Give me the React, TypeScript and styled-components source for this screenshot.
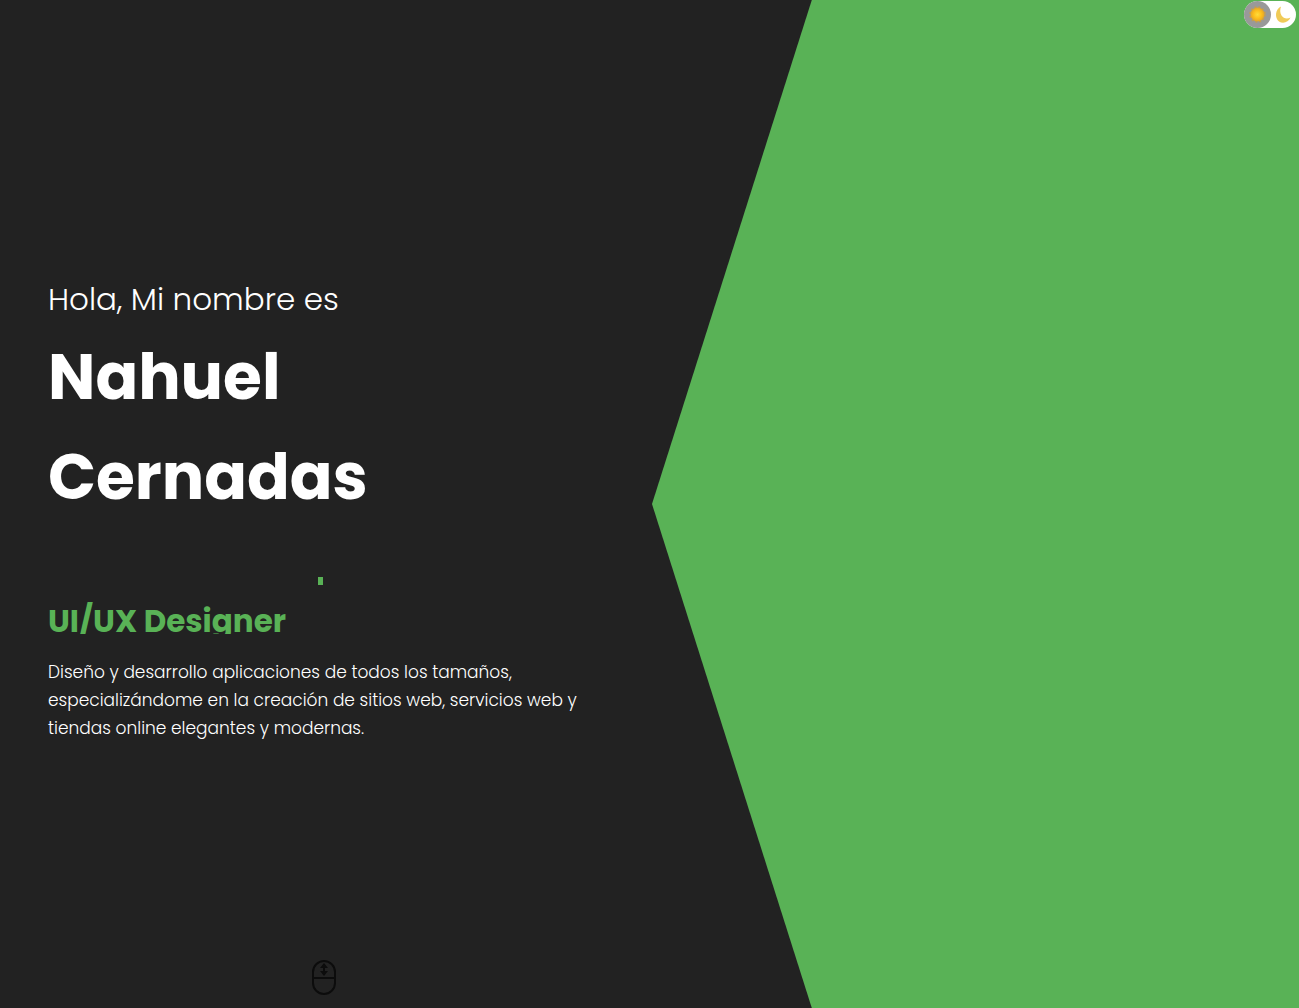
import React, { useState } from "react";
import styled, { createGlobalStyle } from "styled-components";

const GlobalStyle = createGlobalStyle`
  *, *::before, *::after { box-sizing: border-box; }
  body {
    margin: 0;
    background: #222;
    font-family: Poppins, Inter, "Open Sans", sans-serif;
  }
`;

const Hero = styled.main`
  position: relative;
  display: grid;
  grid-template-columns: 1fr 1fr;
  column-gap: 5px;
  min-height: 100vh;
  background: #222;
  color: #fff;
`;

const Left = styled.section`
  display: grid;
  grid-template-rows: 1fr auto;
`;

const Content = styled.div`
  align-self: center;
  padding: 68px 48px 12px;
`;

const Intro = styled.h2`
  margin: 0 0 4px;
  font-size: 31px;
  line-height: 48px;
  font-weight: 300;
`;

const Name = styled.h1`
  margin: 0 0 50px;
  max-width: 400px;
  font-size: 63px;
  line-height: 100px;
  font-weight: 700;
`;

const Rotator = styled.div`
  position: relative;
  height: 57px;
  margin-bottom: 24px;
  overflow: hidden;
  color: #59b256;
`;

const Role = styled.h3`
  margin: 0;
  font-size: 31px;
  line-height: 88px;
  font-weight: 700;
`;

/* Tail of the outgoing role as it slides out of the rotator */
const Outgoing = styled.span`
  position: absolute;
  top: 0;
  left: 270px;
  width: 5px;
  height: 8px;
  background: currentColor;
`;

const Description = styled.p`
  margin: 0;
  font-size: 17px;
  line-height: 28px;
  font-weight: 300;
`;

const ScrollHint = styled.div`
  display: flex;
  justify-content: center;
  padding-bottom: 13px;

  svg { display: block; }
`;

const Right = styled.section`
  background: #59b256;
  clip-path: polygon(24.7% 0, 100% 0, 100% 100%, 24.7% 100%, 0 50%);
`;

const Toggle = styled.label`
  position: absolute;
  top: 1px;
  right: 3px;
  display: flex;
  align-items: center;
  width: 52px;
  height: 27px;
  border-radius: 14px;
  background: #fff;
  cursor: pointer;

  input {
    position: absolute;
    inset: 0;
    margin: 0;
    opacity: 0;
    cursor: pointer;
  }
`;

const Knob = styled.span<{ $light: boolean }>`
  position: absolute;
  left: ${(p) => (p.$light ? "25px" : "0")};
  width: 27px;
  height: 27px;
  border-radius: 50%;
  background: #999;
`;

const ToggleIcons = styled.svg`
  position: relative;
  display: block;
`;

export default function App() {
  const [light, setLight] = useState(false);
  return (
    <>
      <GlobalStyle />
      <Hero>
        <Left>
          <Content>
            <Intro>Hola, Mi nombre es</Intro>
            <Name>Nahuel Cernadas</Name>
            <Rotator>
              <Outgoing />
              <Role>UI/UX Designer</Role>
            </Rotator>
            <Description>
              Diseño y desarrollo aplicaciones de todos los tamaños, especializándome en la creación de
              sitios web, servicios web y tiendas online elegantes y modernas.
            </Description>
          </Content>
          <ScrollHint>
            <svg width="24" height="35" viewBox="0 0 24 35" fill="none" stroke="#0c0c0c" strokeWidth="2" aria-hidden="true">
              <rect x="1" y="1" width="22" height="33" rx="11" />
              <path d="M1 18H23" />
              <path d="M12 3L16 8H8ZM12 16L8 11H16Z" fill="#0c0c0c" stroke="none" />
              <path d="M12 7V12" />
            </svg>
          </ScrollHint>
        </Left>
        <Right />
        <Toggle>
          <input
            type="checkbox"
            aria-label="Modo claro"
            checked={light}
            onChange={(e) => setLight(e.target.checked)}
          />
          <Knob $light={light} />
          <ToggleIcons width="52" height="27" viewBox="0 0 52 27" aria-hidden="true">
            <defs>
              <radialGradient id="sun">
                <stop offset="0" stopColor="#ffdc3a" />
                <stop offset="0.6" stopColor="#fdbd1b" />
                <stop offset="1" stopColor="#e0a52c" />
              </radialGradient>
            </defs>
            <circle cx="13.5" cy="13.5" r="7" fill="url(#sun)" />
            <circle cx="13.5" cy="13.5" r="7.5" fill="none" stroke="#c89d4b" strokeWidth="1.5" strokeDasharray="2 2" />
            <path d="M37 5.5C31 8 30.5 17 35 20.5C39 23 44.5 21.5 46.5 16.5C43 18.5 39.5 17.5 37.5 14.5C35.8 11.5 36 8.5 37 5.5Z" fill="#f0cb58" />
          </ToggleIcons>
        </Toggle>
      </Hero>
    </>
  );
}
